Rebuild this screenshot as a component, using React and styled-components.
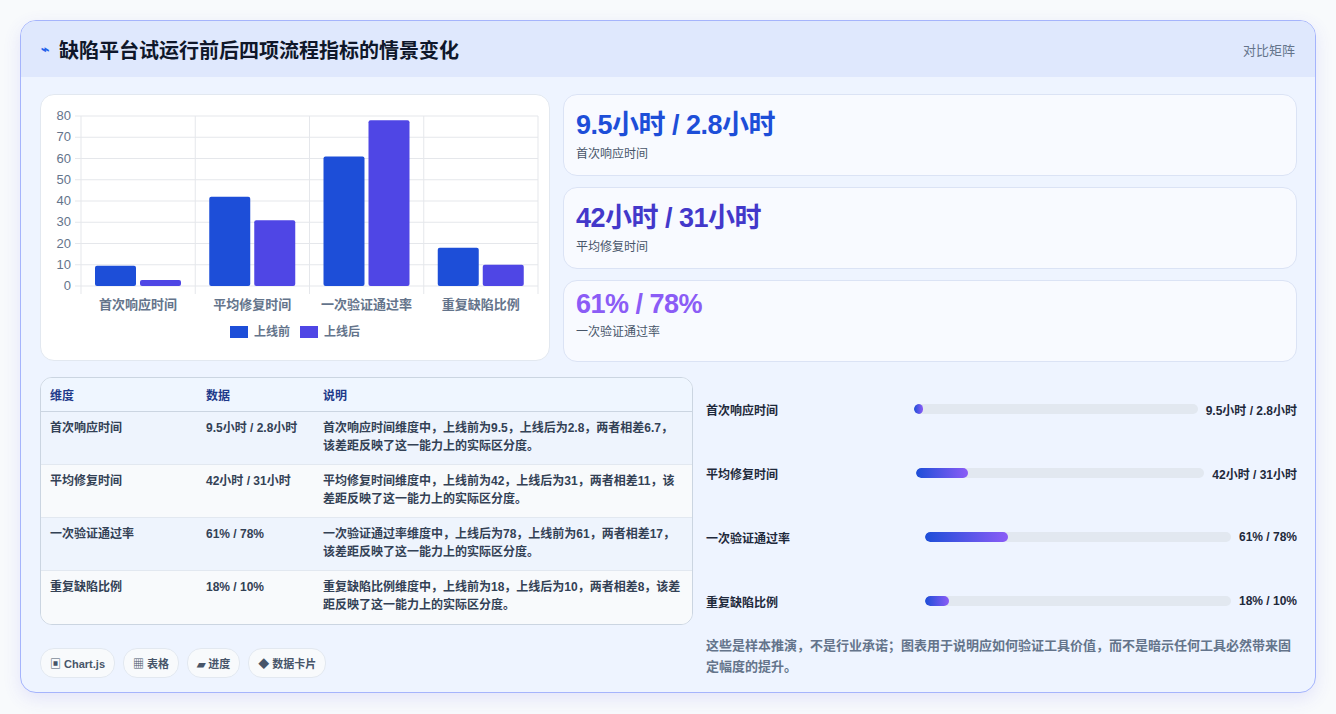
import React from "react";
import styled, { createGlobalStyle } from "styled-components";

const GlobalStyle = createGlobalStyle`
  * { box-sizing: border-box; }
  body {
    margin: 0;
    font-family: "Liberation Sans", "Noto Sans CJK SC", sans-serif;
    background: #f8fafc;
    color: #1e293b;
  }
`;

const Page = styled.div`
  padding: 20px;
  height: 714px;
`;

const Card = styled.div`
  width: 1296px;
  height: 673px;
  border: 1px solid #a5b4fc;
  border-radius: 16px;
  background: #eef4ff;
  overflow: hidden;
  box-shadow: 0 6px 18px rgba(79, 70, 229, 0.12);
`;

const Header = styled.div`
  height: 56px;
  background: #dfe8fd;
  display: flex;
  align-items: center;
  justify-content: space-between;
  padding: 0 20px;
`;

const Title = styled.h1`
  margin: 0;
  font-size: 20px;
  font-weight: 700;
  color: #0f172a;
  display: flex;
  align-items: center;
  gap: 10px;
`;

const Bolt = styled.span`
  color: #2563eb;
  font-size: 14px;
`;

const Tag = styled.span`
  font-size: 13px;
  color: #64748b;
`;

const Body = styled.div`
  padding: 17px 19px;
  display: flex;
  flex-direction: column;
  gap: 15px;
`;

const Row = styled.div`
  display: grid;
  grid-template-columns: ${(p) => p.cols};
  column-gap: 13px;
`;

const ChartPanel = styled.div`
  background: #fff;
  border: 1px solid #e2e8f0;
  border-radius: 14px;
  height: 267px;
  padding: 0 10px;
`;

const Stats = styled.div`
  display: flex;
  flex-direction: column;
  gap: 11px;
`;

const Stat = styled.div`
  background: #f8faff;
  border: 1px solid #dbe3f5;
  border-radius: 14px;
  height: 82px;
  padding: 8px 12px;
`;

const StatValue = styled.div`
  font-size: 27px;
  font-weight: 700;
  letter-spacing: -0.5px;
  color: ${(p) => p.color};
`;

const StatLabel = styled.div`
  font-size: 12px;
  color: #475569;
  margin-top: 2px;
`;

const Left = styled.div`
  display: flex;
  flex-direction: column;
  gap: 23px;
`;

const Table = styled.table`
  width: 100%;
  border-collapse: separate;
  border-spacing: 0;
  border: 1px solid #cbd5e1;
  border-radius: 12px;
  overflow: hidden;
  font-size: 12px;
  font-weight: 700;
  background: #f8fafc;
`;

const Th = styled.th`
  text-align: left;
  color: #1e3a8a;
  background: #eff6ff;
  padding: 8px 9px;
  height: 33px;
  border-bottom: 1px solid #cbd5e1;
  width: ${(p) => p.w || "auto"};
`;

const Td = styled.td`
  padding: 7px 9px;
  height: 53px;
  vertical-align: top;
  line-height: 18px;
  color: #334155;
  background: ${(p) => (p.odd ? "#eef4fd" : "#f8fafc")};
  border-bottom: ${(p) => (p.last ? "none" : "1px solid #e2e8f0")};
`;

const Pills = styled.div`
  display: flex;
  gap: 8px;
`;

const Pill = styled.span`
  padding: 6px 9px;
  border: 1px solid #e2e8f0;
  border-radius: 14px;
  background: #f8fafc;
  font-size: 11px;
  font-weight: 700;
  color: #475569;
`;

const Right = styled.div`
  display: flex;
  flex-direction: column;
  padding-top: 0;
`;

const ProgRow = styled.div`
  height: 64px;
  display: flex;
  align-items: center;
  font-size: 12px;
  font-weight: 700;
  color: #1e293b;
  gap: 8px;
`;

const ProgLabel = styled.span`
  width: ${(p) => p.w}px;
  flex-shrink: 0;
`;

const Track = styled.div`
  flex: 1;
  height: 10px;
  border-radius: 5px;
  background: #e2e8f0;
  overflow: hidden;
`;

const Fill = styled.div`
  height: 100%;
  border-radius: 5px;
  background: linear-gradient(90deg, #1d4ed8, #8b5cf6);
`;

const Note = styled.p`
  margin: 2px 0 0;
  font-size: 13px;
  line-height: 21px;
  color: #64748b;
  font-weight: 700;
`;

const data = [
  ["首次响应时间", 9.5, 2.8, "9.5小时 / 2.8小时", "首次响应时间维度中，上线前为9.5，上线后为2.8，两者相差6.7，该差距反映了这一能力上的实际区分度。"],
  ["平均修复时间", 42, 31, "42小时 / 31小时", "平均修复时间维度中，上线前为42，上线后为31，两者相差11，该差距反映了这一能力上的实际区分度。"],
  ["一次验证通过率", 61, 78, "61% / 78%", "一次验证通过率维度中，上线后为78，上线前为61，两者相差17，该差距反映了这一能力上的实际区分度。"],
  ["重复缺陷比例", 18, 10, "18% / 10%", "重复缺陷比例维度中，上线前为18，上线后为10，两者相差8，该差距反映了这一能力上的实际区分度。"],
];

const progress = [
  { w: 200, pct: 3 },
  { w: 202, pct: 18 },
  { w: 211, pct: 27 },
  { w: 211, pct: 8 },
];

const BarChart = () => {
  const x0 = 30, x1 = 487, y0 = 191, scale = 2.125;
  const cw = (x1 - x0) / 4;
  return (
    <svg width="490" height="265" fontFamily="Liberation Sans, Noto Sans CJK SC, sans-serif">
      {[0, 10, 20, 30, 40, 50, 60, 70, 80].map((v) => (
        <g key={v}>
          <line x1={x0 - 6} x2={x1} y1={y0 - v * scale} y2={y0 - v * scale} stroke="#e5e7eb" />
          <text x={x0 - 10} y={y0 - v * scale + 4} fontSize="13" fill="#64748b" textAnchor="end">{v}</text>
        </g>
      ))}
      {[0, 1, 2, 3, 4].map((i) => (
        <line key={i} x1={x0 + i * cw} x2={x0 + i * cw} y1={y0 - 170} y2={y0 + 8} stroke="#e5e7eb" />
      ))}
      {data.map((d, i) => {
        const cx = x0 + i * cw;
        return (
          <g key={i}>
            <rect x={cx + 14} y={y0 - d[1] * scale} width={41} height={d[1] * scale} rx="2" fill="#1d4ed8" />
            <rect x={cx + 59} y={y0 - d[2] * scale} width={41} height={d[2] * scale} rx="2" fill="#4f46e5" />
            <text x={cx + cw / 2} y={y0 + 23} fontSize="13" fill="#64748b" textAnchor="middle" fontWeight="700">{d[0]}</text>
          </g>
        );
      })}
      <rect x="179" y="231" width="18" height="12" fill="#1d4ed8" />
      <text x="203" y="241" fontSize="12" fill="#64748b" fontWeight="700">上线前</text>
      <rect x="249" y="231" width="18" height="12" fill="#4f46e5" />
      <text x="273" y="241" fontSize="12" fill="#64748b" fontWeight="700">上线后</text>
    </svg>
  );
};

const App = () => (
  <Page>
    <GlobalStyle />
    <Card>
      <Header>
        <Title><Bolt>⌁</Bolt>缺陷平台试运行前后四项流程指标的情景变化</Title>
        <Tag>对比矩阵</Tag>
      </Header>
      <Body>
        <Row cols="510px 734px">
          <ChartPanel><BarChart /></ChartPanel>
          <Stats>
            <Stat><StatValue color="#1d4ed8">9.5小时 / 2.8小时</StatValue><StatLabel>首次响应时间</StatLabel></Stat>
            <Stat><StatValue color="#4338ca">42小时 / 31小时</StatValue><StatLabel>平均修复时间</StatLabel></Stat>
            <Stat><StatValue color="#8b5cf6">61% / 78%</StatValue><StatLabel>一次验证通过率</StatLabel></Stat>
          </Stats>
        </Row>
        <Row cols="653px 591px">
          <Left>
            <Table>
              <thead>
                <tr><Th w="156px">维度</Th><Th w="117px">数据</Th><Th>说明</Th></tr>
              </thead>
              <tbody>
                {data.map((d, i) => (
                  <tr key={i}>
                    <Td odd={i % 2 === 0} last={i === 3}>{d[0]}</Td>
                    <Td odd={i % 2 === 0} last={i === 3}>{d[3]}</Td>
                    <Td odd={i % 2 === 0} last={i === 3}>{d[4]}</Td>
                  </tr>
                ))}
              </tbody>
            </Table>
            <Pills>
              <Pill>▣ Chart.js</Pill>
              <Pill>▦ 表格</Pill>
              <Pill>▰ 进度</Pill>
              <Pill>◆ 数据卡片</Pill>
            </Pills>
          </Left>
          <Right>
            {data.map((d, i) => (
              <ProgRow key={i}>
                <ProgLabel w={progress[i].w}>{d[0]}</ProgLabel>
                <Track><Fill style={{ width: `${progress[i].pct}%` }} /></Track>
                <span>{d[3]}</span>
              </ProgRow>
            ))}
            <Note>这些是样本推演，不是行业承诺；图表用于说明应如何验证工具价值，而不是暗示任何工具必然带来固定幅度的提升。</Note>
          </Right>
        </Row>
      </Body>
    </Card>
  </Page>
);

export default App;
